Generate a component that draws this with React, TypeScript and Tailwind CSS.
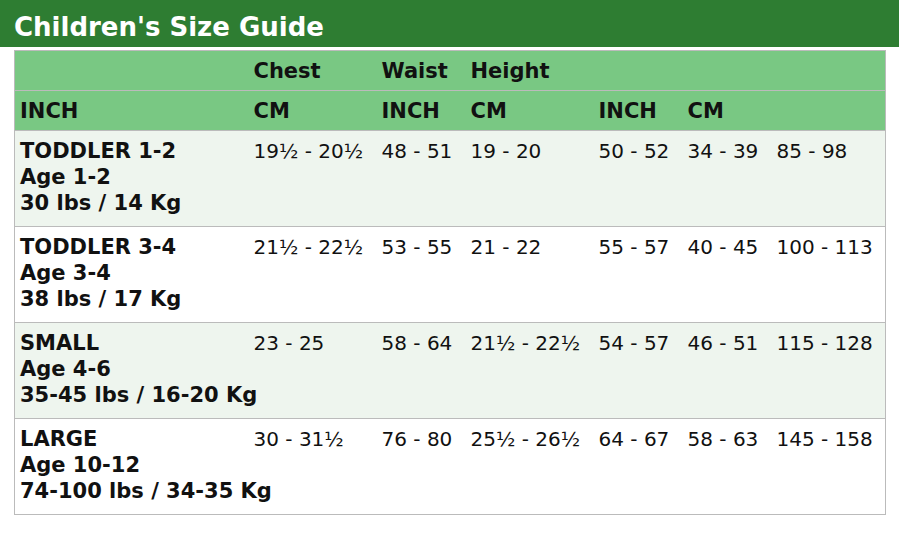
import React from 'react';

const rows = [
    { name: 'TODDLER 1-2', age: 'Age 1-2', weight: '30 lbs / 14 Kg', cells: ['19½ - 20½', '48 - 51', '19 - 20', '50 - 52', '34 - 39', '85 - 98'] },
    { name: 'TODDLER 3-4', age: 'Age 3-4', weight: '38 lbs / 17 Kg', cells: ['21½ - 22½', '53 - 55', '21 - 22', '55 - 57', '40 - 45', '100 - 113'] },
    { name: 'SMALL', age: 'Age 4-6', weight: '35-45 lbs / 16-20 Kg', cells: ['23 - 25', '58 - 64', '21½ - 22½', '54 - 57', '46 - 51', '115 - 128'] },
    { name: 'LARGE', age: 'Age 10-12', weight: '74-100 lbs / 34-35 Kg', cells: ['30 - 31½', '76 - 80', '25½ - 26½', '64 - 67', '58 - 63', '145 - 158'] },
];

const widths = ['w-[234px]', 'w-[128px]', 'w-[89px]', 'w-[128px]', 'w-[89px]', 'w-[89px]', 'w-[114px]'];

export default function App() {
    return (
        <div className="w-[899px] h-[542px] bg-white text-[#111] font-['DejaVu_Sans',sans-serif]">
            {/* Title bar */}
            <div className="h-[47px] bg-[#2e7d32] pl-[14px] pt-[12px]">
                <h1 className="text-[26px] font-bold text-white leading-[30px]">Children's Size Guide</h1>
            </div>

            <div className="px-[14px] pt-[3px]">
                <table className="w-[871px] table-fixed border-collapse border border-[#bbbbbb] text-[20px] leading-[26px]">
                    <colgroup>
                        {widths.map((w, i) => (
                            <col key={i} className={w} />
                        ))}
                    </colgroup>
                    <thead className="bg-[#79c883] font-bold text-[21px]">
                        <tr className="h-[40px] border-b border-[#bbbbbb]">
                            <th className="pl-[5px] text-left"></th>
                            <th className="pl-[5px] text-left">Chest</th>
                            <th className="pl-[5px] text-left">Waist</th>
                            <th className="pl-[5px] text-left">Height</th>
                            <th></th>
                            <th></th>
                            <th></th>
                        </tr>
                        <tr className="h-[40px] border-b border-[#bbbbbb]">
                            <th className="pl-[5px] text-left">INCH</th>
                            <th className="pl-[5px] text-left">CM</th>
                            <th className="pl-[5px] text-left">INCH</th>
                            <th className="pl-[5px] text-left">CM</th>
                            <th className="pl-[5px] text-left">INCH</th>
                            <th className="pl-[5px] text-left">CM</th>
                            <th></th>
                        </tr>
                    </thead>
                    <tbody>
                        {rows.map((r, i) => (
                            <tr key={r.name} className={`h-[96px] border-b border-[#bbbbbb] ${i % 2 === 0 ? 'bg-[#eef5ee]' : 'bg-white'}`}>
                                <td className="pl-[5px] pt-[7px] align-top font-bold text-[21px] whitespace-nowrap">
                                    <div>{r.name}</div>
                                    <div>{r.age}</div>
                                    <div>{r.weight}</div>
                                </td>
                                {r.cells.map((c, j) => (
                                    <td key={j} className="pl-[5px] pt-[7px] align-top whitespace-nowrap">
                                        {c}
                                    </td>
                                ))}
                            </tr>
                        ))}
                    </tbody>
                </table>
            </div>
        </div>
    );
}
